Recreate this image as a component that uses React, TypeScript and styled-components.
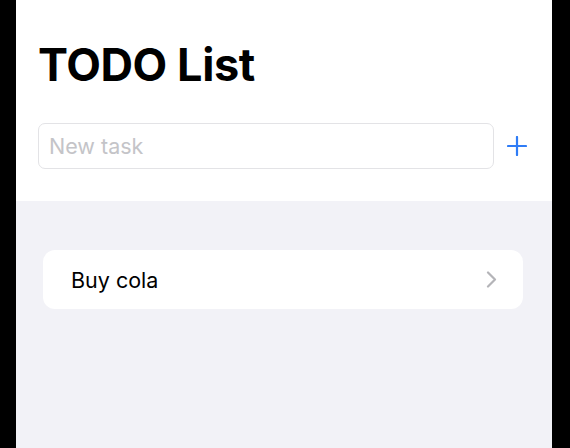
import React, { useState } from 'react';
import styled, { createGlobalStyle } from 'styled-components';

const GlobalStyle = createGlobalStyle`
  html, body {
    margin: 0;
    height: 100%;
    background: #000;
  }
  #root {
    height: 100%;
  }
  * {
    box-sizing: border-box;
  }
`;

const Frame = styled.div`
  height: 100%;
  padding: 0 18px 0 16px;
`;

const Screen = styled.div`
  height: 100%;
  display: flex;
  flex-direction: column;
  background: #f2f2f7;
  font-family: Inter, 'Noto Sans', sans-serif;
`;

const Header = styled.header`
  background: #fff;
  padding: 37px 13px 32px 22px;
`;

const Title = styled.h1`
  margin: 0 0 30px;
  font-size: 45px;
  line-height: 56px;
  font-weight: 700;
  letter-spacing: -0.4px;
  color: #000;
`;

const InputRow = styled.div`
  display: flex;
  align-items: center;
`;

const TaskInput = styled.input`
  flex: 1;
  height: 46px;
  padding: 0 10px;
  border: 1px solid #e3e3e6;
  border-radius: 7px;
  font-family: inherit;
  font-size: 21.5px;
  color: #000;
  outline: none;

  &::placeholder {
    color: #c4c4c8;
  }
`;

const AddButton = styled.button`
  width: 45px;
  height: 46px;
  display: flex;
  align-items: center;
  justify-content: center;
  padding: 0;
  border: none;
  background: none;
  color: #2f7cf6;
  cursor: pointer;
`;

const List = styled.ul`
  list-style: none;
  margin: 0;
  padding: 49px 29px 0 27px;
  display: flex;
  flex-direction: column;
  gap: 12px;
`;

const Row = styled.li`
  height: 59px;
  display: flex;
  align-items: center;
  justify-content: space-between;
  padding: 0 26px 0 28px;
  background: #fff;
  border-radius: 12px;
  font-size: 21.5px;
  color: #000;
`;

const PlusIcon = () => (
  <svg width="20" height="20" viewBox="0 0 20 20">
    <path d="M10 1v18M1 10h18" stroke="currentColor" strokeWidth="2.2" strokeLinecap="round" />
  </svg>
);

const ChevronIcon = () => (
  <svg width="11" height="17" viewBox="0 0 11 17">
    <path d="M2 1.5l7 7-7 7" fill="none" stroke="#b4b4b8" strokeWidth="2.2" strokeLinecap="round" strokeLinejoin="round" />
  </svg>
);

export default function App() {
  const [tasks, setTasks] = useState<string[]>(['Buy cola']);
  const [draft, setDraft] = useState('');

  const add = () => {
    if (!draft.trim()) return;
    setTasks([...tasks, draft.trim()]);
    setDraft('');
  };

  return (
    <Frame>
      <GlobalStyle />
      <Screen>
        <Header>
          <Title>TODO List</Title>
          <InputRow>
            <TaskInput
              placeholder="New task"
              value={draft}
              onChange={(e) => setDraft(e.target.value)}
            />
            <AddButton onClick={add} aria-label="Add task">
              <PlusIcon />
            </AddButton>
          </InputRow>
        </Header>
        <List>
          {tasks.map((task, i) => (
            <Row key={i}>
              {task}
              <ChevronIcon />
            </Row>
          ))}
        </List>
      </Screen>
    </Frame>
  );
}
